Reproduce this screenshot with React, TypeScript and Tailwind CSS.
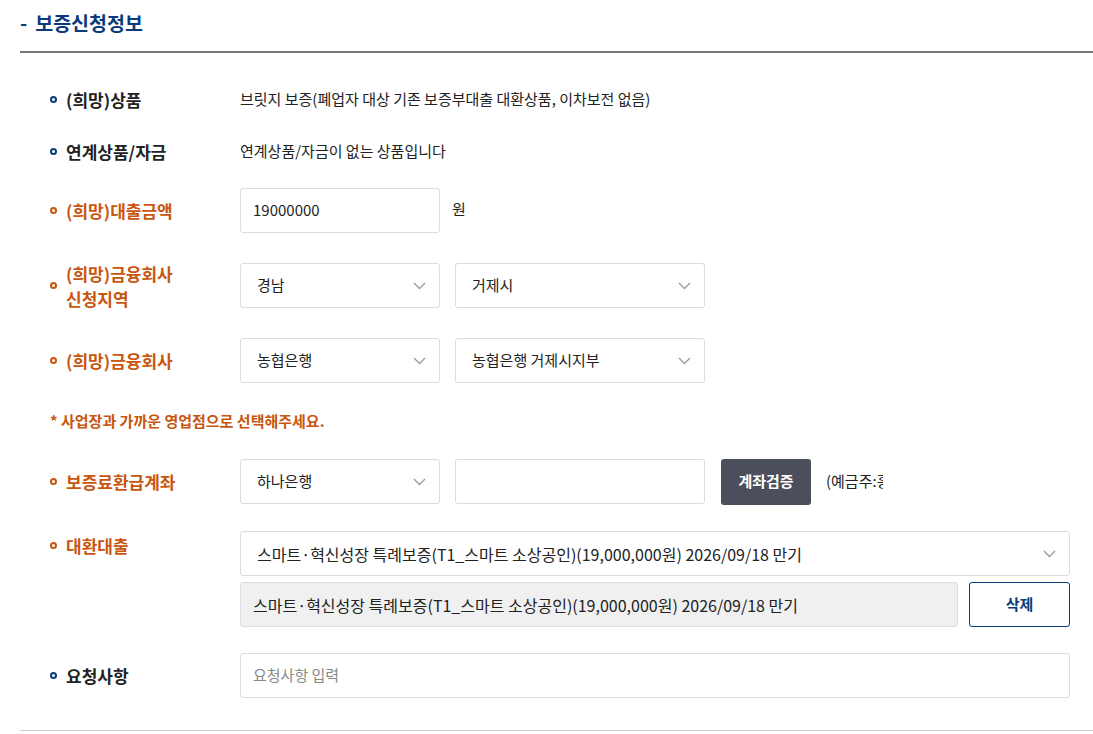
import React from "react";

const font = { fontFamily: '"Noto Sans CJK KR", "Noto Sans", sans-serif' };

function Chevron() {
  return (
    <svg width="13" height="8" viewBox="0 0 13 8" className="shrink-0">
      <polyline points="1,1 6.5,6.5 12,1" fill="none" stroke="#999" strokeWidth="1.3" />
    </svg>
  );
}

function Label({ children, orange }: { children: React.ReactNode; orange?: boolean }) {
  return (
    <div className={`flex w-[190px] shrink-0 items-center gap-[9px] text-[17px] font-semibold leading-[25px] ${orange ? "text-[#c8560f]" : "text-[#222]"}`}>
      <span className={`h-[7px] w-[7px] shrink-0 rounded-full border-2 ${orange ? "border-[#c8560f]" : "border-[#0b3b7a]"}`} />
      <span>{children}</span>
    </div>
  );
}

function SelectBox({ value, width, big }: { value: string; width: string; big?: boolean }) {
  return (
    <div className={`flex h-[45px] ${width} items-center justify-between rounded-[3px] border border-[#dcdcdc] bg-white pl-[16px] pr-[13px] ${big ? "text-[16px]" : "text-[15px]"} text-[#222]`}>
      <span className="truncate">{value}</span>
      <Chevron />
    </div>
  );
}

export default function App() {
  const loan = "스마트·혁신성장 특례보증(T1_스마트 소상공인)(19,000,000원) 2026/09/18 만기";
  return (
    <div className="min-h-[734px] w-[1093px] bg-white pl-[20px]" style={font}>
      <div className="flex h-[39px] items-end gap-[8px] pb-[2px] text-[19.5px] font-bold text-[#0b3a7a]">
        <span>-</span>
        <span>보증신청정보</span>
      </div>
      <div className="mt-[12px] h-[2px] bg-[#777]" />

      <div className="pl-[30px]">
        <div className="mt-[31px] flex h-[30px] items-center">
          <Label>(희망)상품</Label>
          <span className="text-[15px] text-[#222]">브릿지 보증(폐업자 대상 기존 보증부대출 대환상품, 이차보전 없음)</span>
        </div>

        <div className="mt-[22px] flex h-[30px] items-center">
          <Label>연계상품/자금</Label>
          <span className="text-[15px] text-[#222]">연계상품/자금이 없는 상품입니다</span>
        </div>

        <div className="mt-[22px] flex h-[45px] items-center">
          <Label orange>(희망)대출금액</Label>
          <div className="flex h-[45px] w-[200px] items-center rounded-[3px] border border-[#dcdcdc] pl-[12px] text-[15px] text-[#222]">19000000</div>
          <span className="-mt-[2px] ml-[12px] text-[15px] text-[#222]">원</span>
        </div>

        <div className="mt-[30px] flex h-[45px] items-center">
          <Label orange>
            (희망)금융회사
            <br />
            신청지역
          </Label>
          <div className="flex gap-[15px]">
            <SelectBox value="경남" width="w-[200px]" />
            <SelectBox value="거제시" width="w-[250px]" />
          </div>
        </div>

        <div className="mt-[30px] flex h-[45px] items-center">
          <Label orange>(희망)금융회사</Label>
          <div className="flex gap-[15px]">
            <SelectBox value="농협은행" width="w-[200px]" />
            <SelectBox value="농협은행 거제시지부" width="w-[250px]" />
          </div>
        </div>

        <div className="mt-[28px] h-[20px] text-[15px] font-semibold leading-[20px] text-[#c8560f]">* 사업장과 가까운 영업점으로 선택해주세요.</div>

        <div className="mt-[28px] flex h-[45px] items-center">
          <Label orange>보증료환급계좌</Label>
          <div className="flex items-center">
            <SelectBox value="하나은행" width="w-[200px]" />
            <div className="ml-[15px] h-[45px] w-[250px] rounded-[3px] border border-[#dcdcdc]" />
            <button className="ml-[16px] h-[46px] w-[90px] rounded-[3px] bg-[#4a4f5b] text-[15px] font-semibold text-white">계좌검증</button>
            <span className="ml-[15px] w-[57px] overflow-hidden whitespace-nowrap text-[15px] text-[#222]">(예금주:홍길동)</span>
          </div>
        </div>

        <div className="mt-[27px] flex items-start">
          <div className="pt-[2px]">
            <Label orange>대환대출</Label>
          </div>
          <div className="flex w-[830px] flex-col gap-[6px]">
            <SelectBox value={loan} width="w-[830px]" big />
            <div className="flex gap-[11px]">
              <div className="flex h-[45px] w-[719px] items-center rounded-[3px] border border-[#dcdcdc] bg-[#f0f0f0] pl-[12px] text-[16px] text-[#222]">{loan}</div>
              <button className="h-[45px] w-[101px] rounded-[3px] border border-[#0b3b7a] bg-white text-[15px] font-semibold text-[#0b3b7a]">삭제</button>
            </div>
          </div>
        </div>

        <div className="mt-[26px] flex h-[45px] items-center">
          <Label>요청사항</Label>
          <div className="flex h-[45px] w-[830px] items-center rounded-[3px] border border-[#dcdcdc] pl-[12px] text-[15px] text-[#888]">요청사항 입력</div>
        </div>
      </div>

      <div className="mt-[32px] h-[1px] bg-[#ccc]" />
    </div>
  );
}
